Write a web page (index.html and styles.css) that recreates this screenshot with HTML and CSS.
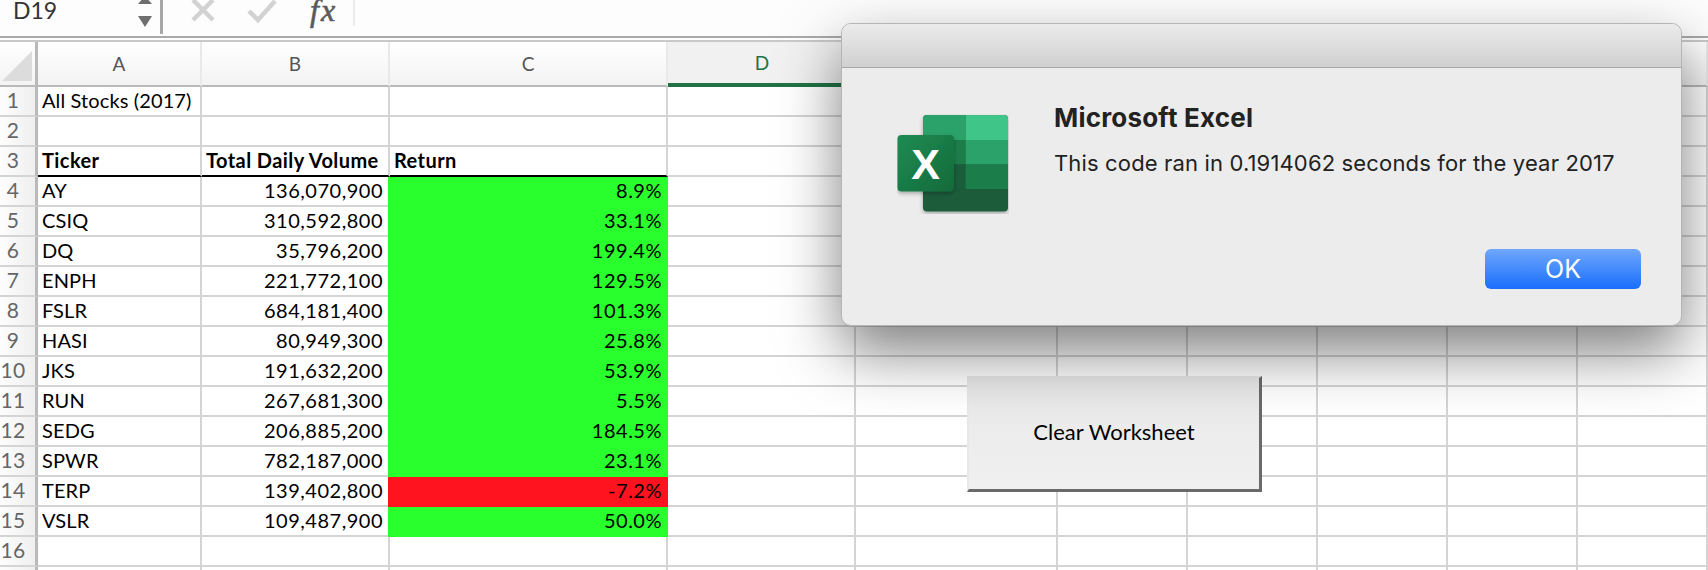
FILE: index.html
```html
<!DOCTYPE html>
<html lang="en">
<head>
  <meta charset="UTF-8">
  <title>Microsoft Excel</title>
  <link rel="stylesheet" href="styles.css">
</head>
<body>
<!-- Formula bar -->
<div class="formula-bar">
  <div class="name-box">
    <span class="cell-name">D19</span>
    <svg class="stepper" viewBox="0 0 16 30">
      <path class="step-up" d="M1 4 L8 -4 L15 4 Z"/>
      <path class="step-down" d="M1 16 H15 L8 27 Z"/>
    </svg>
  </div>
  <div class="bar-actions">
    <svg class="bar-icon icon-cancel" viewBox="0 0 24 24">
      <path d="M2 0 L22 20 M22 0 L2 20"/>
    </svg>
    <svg class="bar-icon icon-enter" viewBox="0 0 30 24">
      <path d="M2 11 L11 20 L28 1"/>
    </svg>
    <span class="fx">fx</span>
  </div>
</div>

<!-- Sheet -->
<table class="sheet">
  <colgroup>
    <col class="col-index">
    <col class="col-a">
    <col class="col-b">
    <col class="col-c">
    <col class="col-d">
    <col class="col-e">
    <col class="col-std">
    <col class="col-std">
    <col class="col-std">
    <col class="col-std">
    <col class="col-std">
  </colgroup>
  <thead>
    <tr>
      <th class="corner">
        <svg class="corner-mark" viewBox="0 0 30 30"><path d="M0 30 L30 0 V30 Z"/></svg>
      </th>
      <th>A</th><th>B</th><th>C</th><th class="selected">D</th><th></th><th></th><th></th><th></th><th></th><th></th>
    </tr>
  </thead>
  <tbody>
    <tr><th>1</th><td>All Stocks (2017)</td><td></td><td></td><td></td><td></td><td></td><td></td><td></td><td></td><td></td></tr>
    <tr><th>2</th><td></td><td></td><td></td><td></td><td></td><td></td><td></td><td></td><td></td><td></td></tr>
    <tr><th>3</th><td class="title-cell">Ticker</td><td class="title-cell">Total Daily Volume</td><td class="title-cell">Return</td><td></td><td></td><td></td><td></td><td></td><td></td><td></td></tr>
    <tr><th>4</th><td>AY</td><td class="num">136,070,900</td><td class="num up">8.9%</td><td></td><td></td><td></td><td></td><td></td><td></td><td></td></tr>
    <tr><th>5</th><td>CSIQ</td><td class="num">310,592,800</td><td class="num up">33.1%</td><td></td><td></td><td></td><td></td><td></td><td></td><td></td></tr>
    <tr><th>6</th><td>DQ</td><td class="num">35,796,200</td><td class="num up">199.4%</td><td></td><td></td><td></td><td></td><td></td><td></td><td></td></tr>
    <tr><th>7</th><td>ENPH</td><td class="num">221,772,100</td><td class="num up">129.5%</td><td></td><td></td><td></td><td></td><td></td><td></td><td></td></tr>
    <tr><th>8</th><td>FSLR</td><td class="num">684,181,400</td><td class="num up">101.3%</td><td></td><td></td><td></td><td></td><td></td><td></td><td></td></tr>
    <tr><th>9</th><td>HASI</td><td class="num">80,949,300</td><td class="num up">25.8%</td><td></td><td></td><td></td><td></td><td></td><td></td><td></td></tr>
    <tr><th>10</th><td>JKS</td><td class="num">191,632,200</td><td class="num up">53.9%</td><td></td><td></td><td></td><td></td><td></td><td></td><td></td></tr>
    <tr><th>11</th><td>RUN</td><td class="num">267,681,300</td><td class="num up">5.5%</td><td></td><td></td><td></td><td></td><td></td><td></td><td></td></tr>
    <tr><th>12</th><td>SEDG</td><td class="num">206,885,200</td><td class="num up">184.5%</td><td></td><td></td><td></td><td></td><td></td><td></td><td></td></tr>
    <tr><th>13</th><td>SPWR</td><td class="num">782,187,000</td><td class="num up">23.1%</td><td></td><td></td><td></td><td></td><td></td><td></td><td></td></tr>
    <tr><th>14</th><td>TERP</td><td class="num">139,402,800</td><td class="num down">-7.2%</td><td></td><td></td><td></td><td></td><td></td><td></td><td></td></tr>
    <tr><th>15</th><td>VSLR</td><td class="num">109,487,900</td><td class="num up">50.0%</td><td></td><td></td><td></td><td></td><td></td><td></td><td></td></tr>
    <tr><th>16</th><td></td><td></td><td></td><td></td><td></td><td></td><td></td><td></td><td></td><td></td></tr>
    <tr><th></th><td></td><td></td><td></td><td></td><td></td><td></td><td></td><td></td><td></td><td></td></tr>
  </tbody>
</table>

<!-- Macro button placed on the sheet -->
<button class="clear-btn">Clear Worksheet</button>

<!-- Alert -->
<div class="dialog">
  <div class="dialog-title"></div>
  <div class="dialog-body">
    <svg class="excel-logo" viewBox="0 0 112 100">
      <defs>
        <linearGradient id="tile" x1="0" y1="0" x2="1" y2="1">
          <stop offset="0" stop-color="#1f8c52"/>
          <stop offset="1" stop-color="#136a3b"/>
        </linearGradient>
        <filter id="logoShadow" x="-20%" y="-20%" width="140%" height="140%">
          <feDropShadow dx="0" dy="2" stdDeviation="2" flood-color="#000" flood-opacity="0.3"/>
        </filter>
      </defs>
      <g filter="url(#logoShadow)">
        <rect x="26" y="1" width="85" height="96.5" rx="4" fill="#1b5b3a"/>
      </g>
      <path d="M30 1 H68.6 V26 H26 V5 A4 4 0 0 1 30 1 Z" fill="#2ba26a"/>
      <path d="M68.6 1 H107 A4 4 0 0 1 111 5 V26 H68.6 Z" fill="#3fc587"/>
      <rect x="26" y="26" width="42.6" height="24.5" fill="#1c7d4a"/>
      <rect x="68.6" y="26" width="42.4" height="24.5" fill="#2ba26a"/>
      <rect x="26" y="50.5" width="42.6" height="24.5" fill="#1a5d3a"/>
      <rect x="68.6" y="50.5" width="42.4" height="24.5" fill="#1b7d4a"/>
      <rect x="0.5" y="21" width="56.5" height="56.5" rx="4" fill="url(#tile)" filter="url(#logoShadow)"/>
      <text class="logo-x" x="28.7" y="65">X</text>
    </svg>
    <div class="dialog-text">
      <h1 class="dialog-heading">Microsoft Excel</h1>
      <p class="dialog-message">This code ran in 0.1914062 seconds for the year 2017</p>
    </div>
  </div>
  <div class="dialog-footer">
    <button class="ok-btn">OK</button>
  </div>
</div>
</body>
</html>
```

FILE: styles.css
```css
/* Page */
html, body {
  margin: 0;
  height: 100%;
  overflow: hidden;
}

body {
  width: 1708px;
  height: 570px;
  position: relative;
  background-color: #fff;
  font-family: Lato, "Noto Sans", sans-serif;
  color: #000;
}

/* Formula bar */
.formula-bar {
  height: 36px;
  display: flex;
  background-color: #fdfdfd;
  border-bottom: 2px solid #a9a9a9;
  overflow: hidden;
}

.name-box {
  width: 163px;
  display: flex;
  justify-content: space-between;
  padding: 0 7px 0 13px;
  box-sizing: border-box;
  border-right: 3px solid #a8a8a8;
  height: 34px;
}

.cell-name {
  font-size: 23px;
  line-height: 20px;
  color: #333;
}

.stepper {
  width: 16px;
  height: 30px;
}

.step-up, .step-down {
  fill: #6e6e6e;
}

.bar-actions {
  display: flex;
  align-items: flex-start;
  height: 26px;
  width: 190px;
  border-right: 2px solid #ececec;
}

.bar-icon {
  fill: none;
  stroke: #d2d2d2;
  stroke-width: 4.5;
}

.icon-cancel {
  width: 24px;
  height: 24px;
  margin-left: 28px;
}

.icon-enter {
  width: 30px;
  height: 24px;
  margin-left: 32px;
}

.fx {
  margin-left: 33px;
  font-family: "Liberation Serif", serif;
  font-style: italic;
  font-size: 32px;
  line-height: 21px;
  color: #5a5a5a;
  letter-spacing: 2px;
  -webkit-text-stroke: 0.6px #5a5a5a;
}

/* Sheet grid */
.sheet {
  table-layout: fixed;
  width: 1708px;
  border-collapse: separate;
  border-spacing: 0;
  margin-top: 2px;
  border-top: 2px solid #c9c9c9;
}

.col-index { width: 38px; }
.col-a { width: 164px; }
.col-b { width: 188px; }
.col-c { width: 278px; }
.col-d { width: 188px; }
.col-e { width: 202px; }
.col-std { width: 130px; }

.sheet thead tr {
  height: 45px;
}

.sheet thead th {
  padding: 0;
  font-size: 19px;
  font-weight: 400;
  color: #555;
  background: linear-gradient(#fff, #f3f3f3);
  border-right: 2px solid #e9e9e9;
  border-bottom: 2px solid #b9b9b9;
  box-sizing: border-box;
}

.sheet thead th.corner {
  padding: 6px 3px 2px 2px;
  border-right: 3px solid #b9b9b9;
}

.corner-mark {
  display: block;
  width: 30px;
  height: 30px;
  fill: #dcdcdc;
}

.sheet thead th.selected {
  background: #f1f1f1;
  color: #217346;
  border-right: none;
  border-bottom: 4px solid #217346;
}

.sheet tbody tr {
  height: 30px;
}

.sheet tbody th {
  padding: 0 9px 2px 0;
  font-size: 21px;
  line-height: 26px;
  letter-spacing: 0.4px;
  font-weight: 400;
  color: #666;
  text-align: center;
  background: linear-gradient(to right, #fdfdfd, #efefef);
  border-right: 3px solid #b9b9b9;
  border-bottom: 2px solid #d4d4d4;
}

.sheet td {
  padding: 0 5px 2px 4px;
  font-size: 20px;
  line-height: 26px;
  letter-spacing: 0.12px;
  white-space: nowrap;
  overflow: hidden;
  border-right: 2px solid #d4d4d4;
  border-bottom: 2px solid #d4d4d4;
}

.sheet td.title-cell {
  font-weight: 700;
  letter-spacing: 0.42px;
  border-bottom-color: #000;
}

.sheet td.num {
  text-align: right;
  letter-spacing: 0.5px;
}

.sheet td.up {
  padding-right: 4px;
  background-color: #2aff2e;
  border-color: #2aff2e;
  box-shadow: -2px 0 0 #2aff2e;
}

.sheet td.down {
  padding-right: 4px;
  background-color: #ff131f;
  border-color: #ff131f;
  box-shadow: -2px 0 0 #ff131f;
}

/* Macro button on the sheet */
.clear-btn {
  position: absolute;
  left: 967px;
  top: 376px;
  width: 295px;
  height: 116px;
  padding: 0 0 4px;
  background: linear-gradient(#e8e8e8, #f0f0f0);
  border: 0;
  border-top: 2px solid #e8e8e8;
  border-left: 2px solid #e8e8e8;
  border-right: 3px solid #6a6a6a;
  border-bottom: 3px solid #6a6a6a;
  font-family: Lato, "Noto Sans", sans-serif;
  font-size: 22px;
  color: #000;
}

/* Alert dialog */
.dialog {
  position: absolute;
  left: 841px;
  top: 23px;
  width: 841px;
  height: 303px;
  box-sizing: border-box;
  display: flex;
  flex-direction: column;
  background-color: #ececec;
  border-radius: 10px;
  border: 1px solid #b5b5b5;
  box-shadow: 0 26px 60px rgba(0, 0, 0, 0.5);
  font-family: Inter, Roboto, sans-serif;
  color: #222;
  overflow: hidden;
}

.dialog-title {
  height: 43px;
  flex-shrink: 0;
  background: linear-gradient(#ebebeb, #d0d0d0);
  border-bottom: 1px solid #a8a8a8;
}

.dialog-body {
  flex: 1;
  display: flex;
  align-items: flex-start;
  padding: 46px 0 0 55px;
}

.excel-logo {
  width: 112px;
  height: 100px;
  flex-shrink: 0;
}

.logo-x {
  font-family: "Liberation Sans", sans-serif;
  font-weight: 700;
  font-size: 43px;
  fill: #fff;
  text-anchor: middle;
}

.dialog-text {
  margin-left: 45px;
  margin-top: -11px;
}

.dialog-heading {
  margin: 0;
  font-size: 26px;
  line-height: 30px;
  font-weight: 700;
  letter-spacing: 0.2px;
}

.dialog-message {
  margin: 16px 0 0;
  font-size: 22px;
  line-height: 28px;
  letter-spacing: 0.15px;
}

.dialog-footer {
  display: flex;
  justify-content: flex-end;
  padding: 0 40px 36px 0;
}

.ok-btn {
  width: 156px;
  height: 40px;
  padding: 0;
  border: 0;
  border-radius: 6px;
  background: linear-gradient(#6fa7fb, #1a6ffd);
  color: #fff;
  font-family: Inter, Roboto, sans-serif;
  font-size: 25px;
}
```
